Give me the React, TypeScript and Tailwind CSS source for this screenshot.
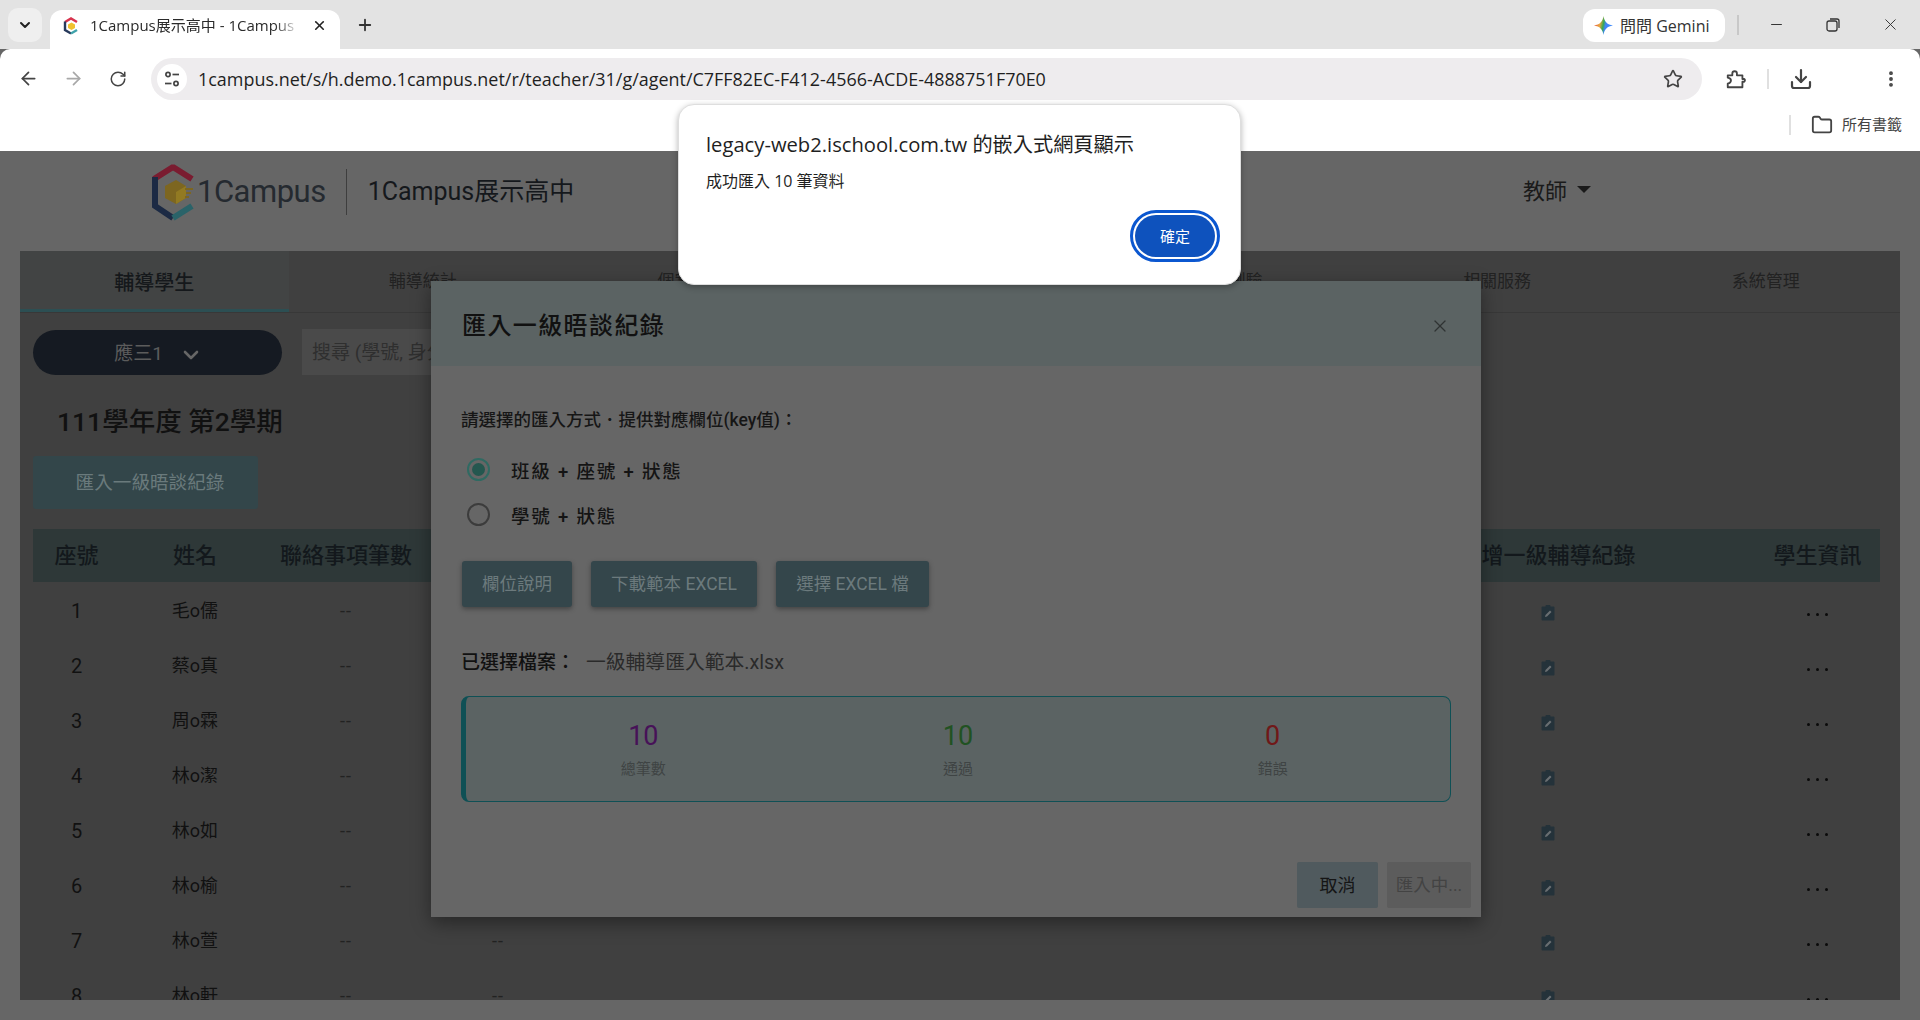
import { ArrowLeft, ArrowRight, ChevronDown, Download, EllipsisVertical, Folder, Minus, Plus, RotateCw, Star, X } from "lucide-react"

const cjk = "font-['Roboto','Noto_Sans_CJK_TC',sans-serif]"
const ui = "font-['Open_Sans','Noto_Sans_CJK_TC',sans-serif]"

const students = ["毛o儒", "蔡o真", "周o霖", "林o潔", "林o如", "林o榆", "林o萱", "林o軒"]
const tabs = ["輔導學生", "輔導統計", "個案管理", "晤談紀錄", "心理測驗", "相關服務", "系統管理"]
const stats = [
  { value: "10", label: "總筆數", color: "text-[#471258]" },
  { value: "10", label: "通過", color: "text-[#215222]" },
  { value: "0", label: "錯誤", color: "text-[#701818]" },
]

const Logo = () => (
  <svg width="44" height="60" viewBox="0 0 44 60" className="shrink-0">
    <path d="M2 17 L21 5 L40 17" fill="none" stroke="#7a1c30" strokeWidth="6" strokeLinejoin="bevel" />
    <path d="M3 15 V44 L21 56" fill="none" stroke="#1c2a44" strokeWidth="6" />
    <path d="M21 56 L40 44" fill="none" stroke="#2a6369" strokeWidth="6" />
    <path d="M13 24 L24 18 L34 24 V36 L24 42 L13 36 Z" fill="#7d6620" />
    <path d="M24 30 L34 24 V36 L24 42 Z" fill="#927a22" />
    <path d="M33 27 H41 M34 31 H39 M33 35 H37" stroke="#7d6620" strokeWidth="2" />
  </svg>
)

const RecordIcon = () => (
  <svg width="14" height="16" viewBox="0 0 14 16">
    <rect x="0.5" y="1.5" width="13" height="14" rx="1" fill="#24323a" />
    <rect x="4.5" y="0" width="5" height="3" rx="1" fill="#24323a" />
    <path d="M4 12 L4.5 10 L9 5.5 L10.5 7 L6 11.5 Z" fill="#6a6f72" />
  </svg>
)

const Dots = () => (
  <div className="mt-[7px] flex items-center justify-center gap-[6px]">
    <span className="size-[3px] rounded-full bg-[#0a0a0a]" />
    <span className="size-[3px] rounded-full bg-[#0a0a0a]" />
    <span className="size-[3px] rounded-full bg-[#0a0a0a]" />
  </div>
)

const Radio = ({ checked, label }: { checked?: boolean; label: string }) => (
  <div className="flex h-[24px] items-center gap-[21px]">
    <span className={`flex size-[23px] items-center justify-center rounded-full border-2 ${checked ? "border-[#2f6a62]" : "border-[#3c3c3c]"}`}>
      {checked && <span className="size-[13px] rounded-full bg-[#24574f]" />}
    </span>
    <span className="pt-[8px] text-[18.5px] font-medium tracking-[1.8px] text-[#141414]">{label}</span>
  </div>
)

const ActionButton = ({ label, width }: { label: string; width: string }) => (
  <button className={`flex h-[46px] items-center justify-center rounded-[3px] bg-[#34464b] pt-[1px] text-[17.5px] text-[#6c7a7d] shadow-[0_2px_5px_rgba(0,0,0,0.35)] ${width}`}>
    {label}
  </button>
)

const gridCols = "grid grid-cols-[87px_150px_152px_152px_1fr_195px_110px_125px]"

export default function App() {
  return (
    <div lang="zh-TW" className={`relative h-[1020px] w-full overflow-hidden bg-[#666666] ${cjk}`}>
      {/* browser chrome */}
      <div className={`relative flex h-[49px] items-start bg-[#e3e3e3] ${ui}`}>
        <div className="ml-2 mt-2 flex h-[34px] w-[34px] items-center justify-center rounded-[10px] bg-[#efefef]">
          <ChevronDown size={16} strokeWidth={3} className="text-[#222]" />
        </div>
        <div className="ml-2 mt-[10px] flex h-[39px] w-[290px] items-center rounded-t-[12px] bg-white pb-[8px] pl-[13px] pr-[13px]">
          <svg width="16" height="18" viewBox="0 0 16 18" className="mr-[11px] shrink-0">
            <path d="M2 5 L8 1.5 L14 5" fill="none" stroke="#d8344f" strokeWidth="2.4" />
            <path d="M2 4.5 V13 L8 16.5" fill="none" stroke="#273a5c" strokeWidth="2.4" />
            <path d="M8 16.5 L14 13" fill="none" stroke="#3fa2aa" strokeWidth="2.4" />
            <path d="M5 7.5 L8.5 5.5 L12 7.5 V11 L8.5 13 L5 11 Z" fill="#f0c230" />
          </svg>
          <span className="min-w-0 flex-1 overflow-hidden whitespace-nowrap text-[15px] text-[#2a2a2a] [mask-image:linear-gradient(to_right,black_88%,transparent)]">1Campus展示高中 - 1Campus</span>
          <X size={15} strokeWidth={2.6} className="ml-3 shrink-0 text-[#222]" />
        </div>
        <Plus size={18} strokeWidth={2.4} className="ml-4 mt-[16px] text-[#333]" />
        <div className="ml-auto mt-[9px] flex h-[33px] w-[142px] items-center gap-[7px] rounded-[12px] bg-white pl-[11px]">
          <svg width="19" height="19" viewBox="0 0 20 20">
            <defs>
              <linearGradient id="gem" x1="0" y1="0.4" x2="1" y2="0.6">
                <stop offset="0" stopColor="#e8503f" />
                <stop offset="0.3" stopColor="#e8a83f" />
                <stop offset="0.48" stopColor="#34a853" />
                <stop offset="0.6" stopColor="#4285f4" />
                <stop offset="1" stopColor="#3b8cff" />
              </linearGradient>
            </defs>
            <path d="M10 0 C10.8 6 14 9.2 20 10 C14 10.8 10.8 14 10 20 C9.2 14 6 10.8 0 10 C6 9.2 9.2 6 10 0 Z" fill="url(#gem)" />
          </svg>
          <span className="whitespace-nowrap text-[16px] text-[#333]">問問 Gemini</span>
        </div>
        <div className="ml-[12px] mt-[15px] h-[20px] w-[2px] bg-[#c8c8c8]" />
        <div className="ml-[29px] flex w-[152px] items-center justify-between pr-[20px] pt-[15px] text-[#333]">
          <Minus size={17} strokeWidth={1.4} />
          <svg width="14" height="14" viewBox="0 0 14 14" fill="none" stroke="#333" strokeWidth="1.3">
            <rect x="1" y="3" width="10" height="10" rx="2" />
            <path d="M4 1 H11 Q13 1 13 3 V10" />
          </svg>
          <X size={19} strokeWidth={1.2} />
        </div>
      </div>

      <div className={`flex h-[51px] items-center rounded-t-[10px] bg-white pt-[8px] ${ui}`}>
        <ArrowLeft size={21} strokeWidth={2} className="ml-[18px] text-[#444]" />
        <ArrowRight size={21} strokeWidth={2} className="ml-[24px] text-[#a8a8a8]" />
        <RotateCw size={18} strokeWidth={2} className="ml-[25px] text-[#444]" />
        <div className="ml-[24px] flex h-[42px] w-[1551px] items-center rounded-full bg-[#eeecee] pl-[6px] pr-[19px]">
          <div className="flex size-[30px] items-center justify-center rounded-full bg-white">
            <svg width="16" height="16" viewBox="0 0 16 16" fill="none" stroke="#444" strokeWidth="1.7">
              <circle cx="4" cy="3.5" r="2.1" />
              <path d="M8.5 3.5 H15" />
              <circle cx="12" cy="12.5" r="2.1" />
              <path d="M1 12.5 H7.5" />
            </svg>
          </div>
          <span className="ml-[11px] flex-1 whitespace-nowrap pt-[1px] text-[17.95px] text-[#1f1f1f]">1campus.net/s/h.demo.1campus.net/r/teacher/31/g/agent/C7FF82EC-F412-4566-ACDE-4888751F70E0</span>
          <Star size={20} strokeWidth={2} className="text-[#444]" />
        </div>
        <svg width="22" height="22" viewBox="0 0 24 24" fill="none" stroke="#444" strokeWidth="2" className="ml-[23px]">
          <path d="M3 8 H8 V6 Q8 3.5 10.5 3.5 Q13 3.5 13 6 V8 H19 V12 H21 Q22.5 13 21 15 H19 V21 H3 V17 Q6.5 16 6.5 13.5 Q6.5 11 3 10.5 Z" strokeLinejoin="round" />
        </svg>
        <div className="ml-[20px] h-[20px] w-[2px] bg-[#e0e0e0]" />
        <Download size={24} strokeWidth={2.2} className="ml-[20px] text-[#444]" />
        <EllipsisVertical size={20} strokeWidth={2.6} className="ml-[68px] text-[#444]" />
      </div>

      <div className={`flex h-[51px] items-center justify-end bg-white pb-[2px] pr-[18px] ${ui}`}>
        <div className="mr-[20px] h-[20px] w-[2px] bg-[#e0e0e0]" />
        <Folder size={22} strokeWidth={2} className="mr-[9px] text-[#444]" />
        <span className="text-[15px] text-[#444]">所有書籤</span>
      </div>

      {/* page behind the dialogs */}
      <header className="flex h-[82px] items-center bg-[#666666] pl-[152px] pr-[329px]">
        <Logo />
        <span className="ml-[1px] text-[31px] tracking-[-0.5px] text-[#252a30]">1Campus</span>
        <div className="ml-[20px] h-[46px] w-px bg-[#3e3e3e]" />
        <span className="ml-[21px] text-[25px] text-[#15181c]">1Campus展示高中</span>
        <div className="ml-auto flex items-center gap-[10px] pb-[2px] text-[22px] text-[#1a1a1a]">
          教師
          <span className="mb-[4px] h-0 w-0 border-x-[7px] border-t-[7px] border-x-transparent border-t-[#1a1a1a]" />
        </div>
      </header>

      <section className="mx-5 mt-[18px] h-[749px] overflow-hidden bg-[#404040]">
        <nav className="grid h-[62px] grid-cols-7 border-b border-[#383838]">
          {tabs.map((tab, i) => (
            <div
              key={tab}
              className={
                i === 0
                  ? "flex items-center justify-center border-b-[3px] border-[#2c4f53] bg-[#424444] pt-[5px] text-[20px] font-medium text-[#15181b]"
                  : "flex items-center justify-center text-[17px] text-[#222]"
              }
            >
              {tab}
            </div>
          ))}
        </nav>

        <div className="pl-[13px] pr-[20px]">
          <div className="mt-[16px] flex items-center gap-[20px]">
            <div className="flex h-[45px] w-[249px] items-center justify-center gap-[16px] rounded-full bg-[#151a22] pl-[2px] pt-[5px] text-[19px] text-[#5c5c5c]">
              應三1
              <ChevronDown size={24} strokeWidth={2.6} className="text-[#666]" />
            </div>
            <div className="flex h-[46px] w-[500px] items-center bg-[#4a4a4a] pl-[10px] pt-[2px] text-[19px] text-[#2f2f2f]">
              搜尋 (學號, 身分證, 姓名)
            </div>
          </div>

          <h1 className="ml-[24px] mt-[29px] text-[26.5px] leading-[36px] font-medium text-[#111]">111學年度 第2學期</h1>

          <button className="mt-[16px] flex h-[53px] w-[225px] items-center justify-center rounded-[3px] bg-[#33464a] pl-[9px] pt-[2px] text-[18.6px] text-[#6a7a7c]">
            匯入一級晤談紀錄
          </button>

          <div className={`${gridCols} mt-[20px] h-[53px] items-center bg-[#2e3838] text-center text-[22px] font-medium text-[#13181c]`}>
            <span>座號</span>
            <span>姓名</span>
            <span>聯絡事項筆數</span>
            <span />
            <span />
            <span className="whitespace-nowrap">新增一級輔導紀錄</span>
            <span />
            <span>學生資訊</span>
          </div>

          {students.map((name, i) => (
            <div key={name} className={`${gridCols} h-[55px] shrink-0 items-center pt-[2px] text-center text-[#111]`}>
              <span className="text-[20px]">{i + 1}</span>
              <span className="text-[18px]">{name}</span>
              <span className="text-[18px] tracking-[1px] text-[#222]">--</span>
              <span className="text-[18px] tracking-[1px] text-[#222]">--</span>
              <span />
              <span className="mt-[5px] flex justify-center"><RecordIcon /></span>
              <span />
              <Dots />
            </div>
          ))}
        </div>
      </section>

      {/* import dialog */}
      <div className="absolute left-[431px] top-[281px] flex h-[636px] w-[1050px] flex-col bg-[#666666] shadow-[0_6px_18px_rgba(0,0,0,0.4)]">
        <div className="flex h-[85px] shrink-0 items-center justify-between bg-[#5b6363] pl-[31px] pr-[31px] pt-[4px]">
          <h2 className="text-[24px] font-medium tracking-[1.4px] text-[#111]">匯入一級晤談紀錄</h2>
          <X size={20} strokeWidth={1.5} className="mt-[1px] text-[#2f3333]" />
        </div>

        <div className="flex flex-1 flex-col px-[30px]">
          <p className="mt-[41px] text-[17.5px] leading-[26px] font-medium text-[#161616]">請選擇的匯入方式．提供對應欄位(key值)：</p>

          <div className="ml-[6px] mt-[24px] flex flex-col gap-[21px]">
            <Radio checked label="班級 + 座號 + 狀態" />
            <Radio label="學號 + 狀態" />
          </div>

          <div className="mt-[35px] flex gap-[19px] pl-[1px]">
            <ActionButton label="欄位說明" width="w-[110px]" />
            <ActionButton label="下載範本 EXCEL" width="w-[166px]" />
            <ActionButton label="選擇 EXCEL 檔" width="w-[153px]" />
          </div>

          <p className="mt-[42px] flex items-baseline leading-[28px] text-[#2a2a2a]">
            <span className="text-[19px] font-medium text-[#111]">已選擇檔案：</span>
            <span className="ml-[11px] text-[19.8px]">一級輔導匯入範本.xlsx</span>
          </p>

          <div className="mt-[19px] grid h-[106px] grid-cols-3 rounded-[8px] border border-l-[5px] border-[#0f5055] bg-[#5b6363] px-[20px]">
            {stats.map(stat => (
              <div key={stat.label} className="flex flex-col items-center justify-center">
                <span className={`text-[27px] leading-[34px] ${stat.color}`}>{stat.value}</span>
                <span className="mt-[5px] text-[15px] leading-[22px] text-[#3f4444]">{stat.label}</span>
              </div>
            ))}
          </div>

          <div className="mt-auto flex justify-end gap-[9px] pb-[9px]">
            <button className="flex h-[46px] w-[81px] items-center justify-center rounded-[2px] bg-[#505a5e] text-[18px] text-[#151515]">取消</button>
            <button className="-mr-[20px] flex h-[46px] w-[84px] items-center justify-center rounded-[2px] bg-[#5c5c5c] text-[17.5px] text-[#434343]">匯入中...</button>
          </div>
        </div>
      </div>

      {/* browser alert */}
      <div className={`absolute left-[678px] top-[104px] h-[181px] w-[563px] rounded-[16px] border border-[#dedede] bg-white pl-[27px] pr-[25px] shadow-[0_2px_6px_rgba(0,0,0,0.3)] ${ui}`}>
        <p className="mt-[25px] text-[20.2px] leading-[28px] text-[#1f1f1f]">legacy-web2.ischool.com.tw 的嵌入式網頁顯示</p>
        <p className="mt-[12px] text-[16px] leading-[22px] text-[#1f1f1f]">成功匯入 10 筆資料</p>
        <div className="mt-[23px] flex justify-end">
          <button className="flex h-[42px] w-[80px] items-center justify-center rounded-full bg-[#0e52bd] text-[15px] text-white outline-[3px] outline-offset-[2px] outline-[#0b57d0] outline-solid">
            確定
          </button>
        </div>
      </div>
    </div>
  )
}
